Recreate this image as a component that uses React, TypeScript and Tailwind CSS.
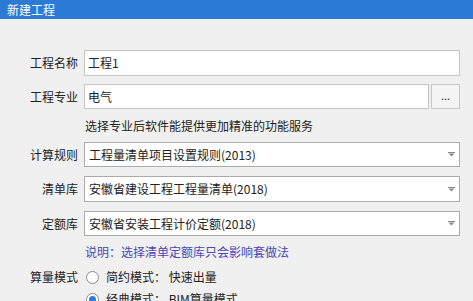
import React from "react";

function Arrow() {
  return (
    <svg width="7" height="5" viewBox="0 0 7 5" className="mr-[4px]">
      <rect x="0" y="0" width="7" height="1" fill="#8a8a8a" />
      <path d="M0.5 1.5 L6.5 1.5 L3.5 4.5 Z" fill="#8a8a8a" />
    </svg>
  );
}

function Row({ label, children, h, mt }: { label: string; children: React.ReactNode; h: string; mt: string }) {
  return (
    <div className={`flex items-center ${h} ${mt}`}>
      <div className="w-[78px] text-right text-[12px] leading-none text-[#222] shrink-0">{label}</div>
      <div className="ml-[6px] flex-1 h-full flex">{children}</div>
    </div>
  );
}

function Select({ value }: { value: string }) {
  return (
    <div className="flex-1 h-full bg-white border border-[#ababab] flex items-center justify-between pl-[4px]">
      <span className="text-[12px] leading-none text-[#222]">{value}</span>
      <Arrow />
    </div>
  );
}

function Radio({ checked }: { checked?: boolean }) {
  return (
    <div className="w-[13px] h-[13px] rounded-full border border-[#8c8c8c] bg-white flex items-center justify-center shrink-0">
      {checked && <div className="w-[7px] h-[7px] rounded-full bg-[#2b7cd6]" />}
    </div>
  );
}

export default function App() {
  return (
    <div className="w-[473px] h-[301px] overflow-hidden bg-[#f0f0f0] font-['Noto_Sans_CJK_SC','Microsoft_YaHei',sans-serif]">
      <div className="h-[19px] bg-[#2b7bd6] flex items-center pl-[7px]">
        <span className="text-white text-[12px] leading-none">新建工程</span>
      </div>
      <div className="pr-[13px]">
        <Row label="工程名称" h="h-[26px]" mt="mt-[31px]">
          <div className="flex-1 h-full bg-white border border-[#c4c4c4] flex items-center pl-[3px]">
            <span className="text-[12px] leading-none text-[#222]">工程1</span>
          </div>
        </Row>
        <Row label="工程专业" h="h-[25px]" mt="mt-[8px]">
          <div className="flex-1 h-full bg-white border border-[#c4c4c4] flex items-center pl-[3px]">
            <span className="text-[12px] leading-none text-[#222]">电气</span>
          </div>
          <div className="ml-[2px] w-[29px] h-full border border-[#c8c8c8] bg-[#f4f4f4] flex items-center justify-center">
            <span className="text-[11px] leading-none text-[#333] -mt-[3px]">...</span>
          </div>
        </Row>
        <div className="h-[33px] flex items-center pl-[85px]">
          <span className="text-[12px] leading-none text-[#222]">选择专业后软件能提供更加精准的功能服务</span>
        </div>
        <Row label="计算规则" h="h-[25px]" mt="mt-0">
          <Select value="工程量清单项目设置规则(2013)" />
        </Row>
        <Row label="清单库" h="h-[26px]" mt="mt-[9px]">
          <Select value="安徽省建设工程工程量清单(2018)" />
        </Row>
        <Row label="定额库" h="h-[25px]" mt="mt-[9px]">
          <Select value="安徽省安装工程计价定额(2018)" />
        </Row>
        <div className="h-[32px] flex items-center pl-[85px]">
          <span className="text-[12px] leading-none text-[#4b47b6]">说明：选择清单定额库只会影响套做法</span>
        </div>
        <div className="flex items-center h-[14px] mt-[2px]">
          <div className="w-[78px] text-right text-[12px] leading-none text-[#222] shrink-0">算量模式</div>
          <div className="ml-[8px] flex items-center">
            <Radio />
            <span className="ml-[7px] text-[12px] leading-none text-[#222]">简约模式： 快速出量</span>
          </div>
        </div>
        <div className="flex items-center h-[14px] mt-[8px]">
          <div className="w-[78px] shrink-0" />
          <div className="ml-[8px] flex items-center">
            <Radio checked />
            <span className="ml-[7px] text-[12px] leading-none text-[#222]">经典模式： BIM算量模式</span>
          </div>
        </div>
      </div>
    </div>
  );
}
